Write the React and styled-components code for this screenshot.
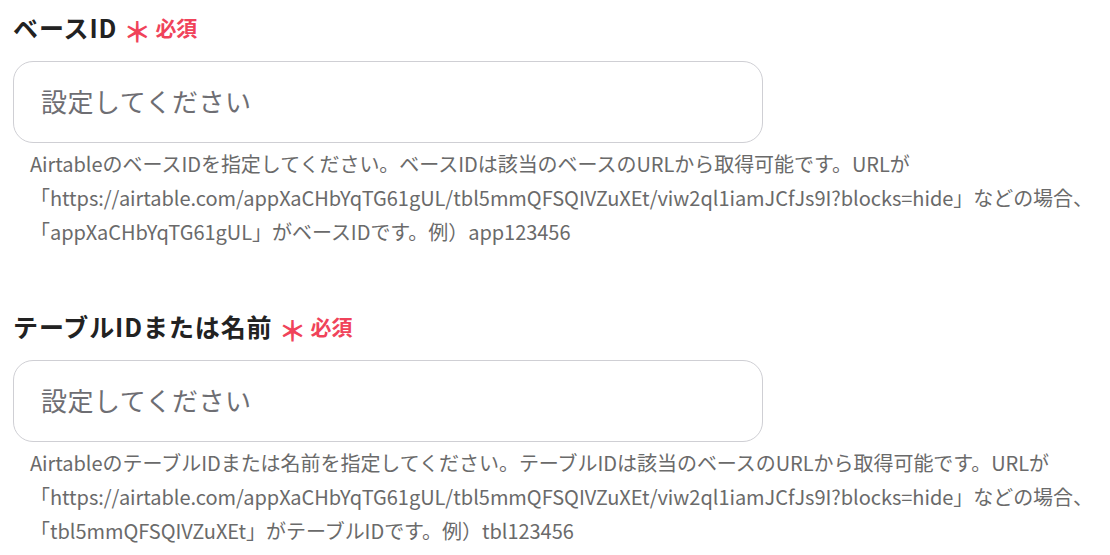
import React from 'react';
import styled, { createGlobalStyle } from 'styled-components';

const GlobalStyle = createGlobalStyle`
  body {
    margin: 0;
    background: #ffffff;
    font-family: "Noto Sans CJK JP", "Noto Sans", sans-serif;
  }
`;

const Page = styled.div`
  padding: 10px 0 0 13px;
  width: 1097px;
`;

const Field = styled.section`
  display: flex;
  flex-direction: column;
  margin-bottom: ${p => p.gap || 0}px;
`;

const LabelRow = styled.div`
  display: flex;
  align-items: center;
  gap: 6px;
  height: 34px;
`;

const LabelText = styled.span`
  font-size: 25px;
  font-weight: 700;
  color: #222222;
  letter-spacing: 0.9px;
`;

const Required = styled.span`
  display: flex;
  align-items: center;
  gap: 4px;
  color: #f0435a;
  font-weight: 700;
  font-size: 21px;
`;

const Star = styled.span`
  font-size: 28px;
  line-height: 1;
  margin-top: 7px;
`;

const Input = styled.input`
  box-sizing: border-box;
  margin-top: 17px;
  width: 750px;
  height: 82px;
  border: 1px solid #cfcfd4;
  border-radius: 20px;
  padding: 0 27px 3px;
  font-family: inherit;
  font-size: 26px;
  letter-spacing: 0.5px;
  color: #333;
  outline: none;
  &::placeholder {
    color: #6e6e73;
  }
`;

const Help = styled.p`
  margin: 4px 0 0 17px;
  font-size: 20px;
  line-height: 34px;
  letter-spacing: -0.04px;
  color: #6a6a6a;
`;

const fields = [
  {
    label: 'ベースID',
    help: [
      'AirtableのベースIDを指定してください。ベースIDは該当のベースのURLから取得可能です。URLが',
      '「https://airtable.com/appXaCHbYqTG61gUL/tbl5mmQFSQIVZuXEt/viw2ql1iamJCfJs9I?blocks=hide」などの場合、',
      '「appXaCHbYqTG61gUL」がベースIDです。例）app123456',
    ],
  },
  {
    label: 'テーブルIDまたは名前',
    help: [
      'AirtableのテーブルIDまたは名前を指定してください。テーブルIDは該当のベースのURLから取得可能です。URLが',
      '「https://airtable.com/appXaCHbYqTG61gUL/tbl5mmQFSQIVZuXEt/viw2ql1iamJCfJs9I?blocks=hide」などの場合、',
      '「tbl5mmQFSQIVZuXEt」がテーブルIDです。例）tbl123456',
    ],
  },
];

export default function App() {
  return (
    <Page>
      <GlobalStyle />
      {fields.map((f, i) => (
        <Field key={f.label} gap={i === 0 ? 60 : 0}>
          <LabelRow>
            <LabelText>{f.label}</LabelText>
            <Required>
              <Star>＊</Star>必須
            </Required>
          </LabelRow>
          <Input placeholder="設定してください" />
          <Help>
            {f.help.map((line, j) => (
              <React.Fragment key={j}>
                {line}
                {j < f.help.length - 1 && <br />}
              </React.Fragment>
            ))}
          </Help>
        </Field>
      ))}
    </Page>
  );
}
